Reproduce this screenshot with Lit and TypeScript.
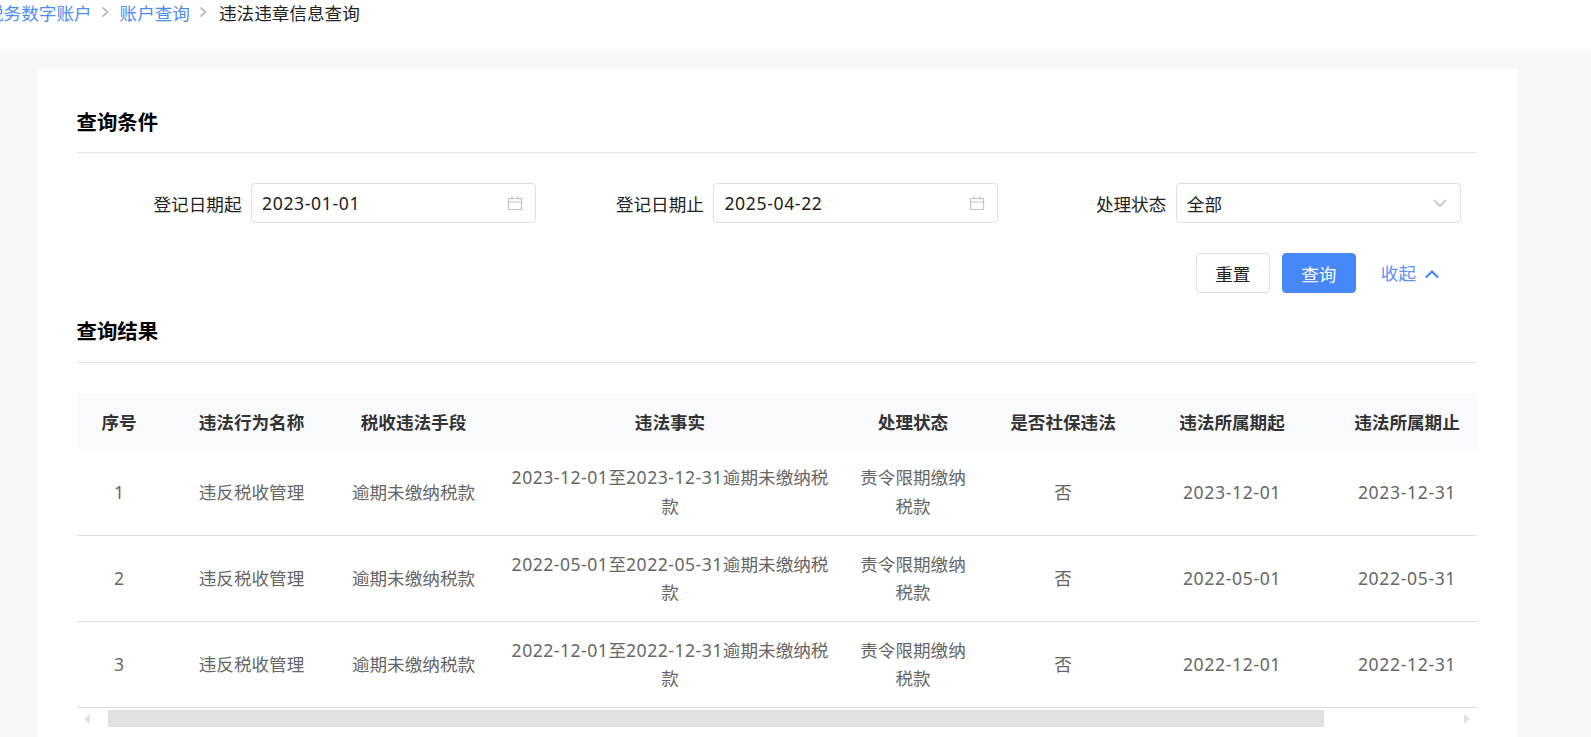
import { LitElement, html, css, svg } from "lit";
import { customElement } from "lit/decorators.js";

const COLS = [84, 181, 143, 370, 116, 184, 154, 196];
const HEAD = ["序号", "违法行为名称", "税收违法手段", "违法事实", "处理状态", "是否社保违法", "违法所属期起", "违法所属期止"];
const ROWS = [
  ["1", "2023-12-01", "2023-12-31"],
  ["2", "2022-05-01", "2022-05-31"],
  ["3", "2022-12-01", "2022-12-31"],
];

const calendar = svg`<path d="M1.500 3.500h13v11h-13zM1.500 7h13M5 1v3.500M11 1v3.500" fill="none" stroke="#bfc2c8" stroke-width="1.2"/>`;

@customElement("app-root")
export class AppRoot extends LitElement {
  static styles = css`
    :host {
      display: block;
      height: 100vh;
      overflow: hidden;
      background: #f7f8fa;
      font-family: "Noto Sans", "Noto Sans CJK SC", sans-serif;
      font-size: 17.6px;
      color: #222;
    }
    .num { letter-spacing: 0.63px; }
    .top { height: 50px; background: #fff; overflow: hidden; }
    .crumbs { display: flex; align-items: center; height: 24px; margin-left: -14px; white-space: nowrap; }
    .crumbs a { color: #4d8bf5; }
    .crumbs svg { margin: 0 10px 0 8px; }
    .crumbs span { margin-left: 1px; }
    .card { margin: 19px 0 0 37px; width: 1400px; padding: 38px 40px 0; background: #fff; height: 700px; }
    .title { font-size: 20.4px; font-weight: 700; color: #000; line-height: 30px; padding-bottom: 15px; border-bottom: 1px solid #e4e6e9; margin-left: -0.5px; }
    .form { display: grid; grid-template-columns: repeat(3, 459px); column-gap: 3.4px; margin-top: 30px; }
    .field { display: flex; justify-content: flex-end; align-items: center; gap: 9.5px; }
    .box { box-sizing: border-box; width: 285px; height: 40px; border: 1px solid #dcdfe3; border-radius: 4px; padding: 0 12px 0 10px; display: flex; justify-content: space-between; align-items: center; color: #222; }
    .actions { display: flex; justify-content: flex-end; align-items: center; margin-top: 30px; padding-right: 38px; }
    .btn { box-sizing: border-box; width: 74px; height: 40px; border: 1px solid #dcdfe3; border-radius: 4px; display: flex; align-items: center; justify-content: center; background: #fff; color: #222; }
    .btn.primary { background: #4688f7; border-color: #4688f7; color: #fff; margin-left: 12px; }
    .fold { display: flex; align-items: center; color: #5f8ff5; margin-left: 25px; gap: 9px; line-height: 24px; padding-bottom: 1px; }
    .fold svg { position: relative; top: 1.5px; }
    .title.second { margin-top: 23px; padding-bottom: 16px; }
    .tablewrap { margin-top: 30px; width: 1400px; overflow: hidden; }
    table { border-collapse: collapse; table-layout: fixed; width: 1428px; text-align: center; }
    th { height: 56px; padding: 0; background: #f9fafd; color: #333; font-weight: 700; }
    td { height: 86px; padding: 0 4px; color: #666; line-height: 28.3px; border-bottom: 1px solid #dedfe2; box-sizing: border-box; }
    td.wide { padding: 0 20px; }
    td.wide .num { letter-spacing: 0.5px; }
    .track { position: relative; width: 1400px; height: 17px; margin-top: 2px; }
    .thumb { position: absolute; left: 31px; top: 0; width: 1216px; height: 17px; background: #e1e1e1; }
    .arr { position: absolute; top: 4px; }
    .arr.l { left: 7px; }
    .arr.r { right: 7px; }
  `;

  private field(label: string, value: string, isDate: boolean) {
    return html`<div class="field">
      <span>${label}</span>
      <div class="box">
        <span class=${isDate ? "num" : ""}>${value}</span>
        ${isDate
          ? html`<svg width="16" height="16" viewBox="0 0 16 16">${calendar}</svg>`
          : html`<svg width="14" height="14" viewBox="0 0 14 14"><path d="M0 4l6 6 6-6" fill="none" stroke="#b4b7bd" stroke-width="1.3"/></svg>`}
      </div>
    </div>`;
  }

  private sep() {
    return html`<svg width="10" height="12" viewBox="0 0 10 12"><path d="M2.500 1.500l5 4.500-5 4.500" fill="none" stroke="#a8abb2" stroke-width="1.5"/></svg>`;
  }

  render() {
    return html`
      <div class="top">
        <div class="crumbs">
          <a>税务数字账户</a>${this.sep()}<a>账户查询</a>${this.sep()}<span>违法违章信息查询</span>
        </div>
      </div>
      <div class="card">
        <div class="title">查询条件</div>
        <div class="form">
          ${this.field("登记日期起", "2023-01-01", true)}
          ${this.field("登记日期止", "2025-04-22", true)}
          ${this.field("处理状态", "全部", false)}
        </div>
        <div class="actions">
          <div class="btn">重置</div>
          <div class="btn primary">查询</div>
          <div class="fold">收起
            <svg width="14" height="10" viewBox="0 0 14 10"><path d="M1 8.500l6-6 6 6" fill="none" stroke="#4688f7" stroke-width="2.200"/></svg>
          </div>
        </div>
        <div class="title second">查询结果</div>
        <div class="tablewrap">
          <table>
            <colgroup>${COLS.map((w) => html`<col style="width:${w}px" />`)}</colgroup>
            <thead><tr>${HEAD.map((h) => html`<th>${h}</th>`)}</tr></thead>
            <tbody>
              ${ROWS.map(
                ([n, a, b]) => html`<tr>
                  <td>${n}</td>
                  <td>违反税收管理</td>
                  <td>逾期未缴纳税款</td>
                  <td class="wide"><span class="num">${a}</span>至<span class="num">${b}</span>逾期未缴纳税款</td>
                  <td>责令限期缴纳税款</td>
                  <td>否</td>
                  <td class="num">${a}</td>
                  <td class="num">${b}</td>
                </tr>`
              )}
            </tbody>
          </table>
        </div>
        <div class="track">
          <svg class="arr l" width="6" height="10" viewBox="0 0 6 10"><path d="M6 0v10L0 5z" fill="#e1e1e1"/></svg>
          <div class="thumb"></div>
          <svg class="arr r" width="6" height="10" viewBox="0 0 6 10"><path d="M0 0v10l6-5z" fill="#e1e1e1"/></svg>
        </div>
      </div>
    `;
  }
}
